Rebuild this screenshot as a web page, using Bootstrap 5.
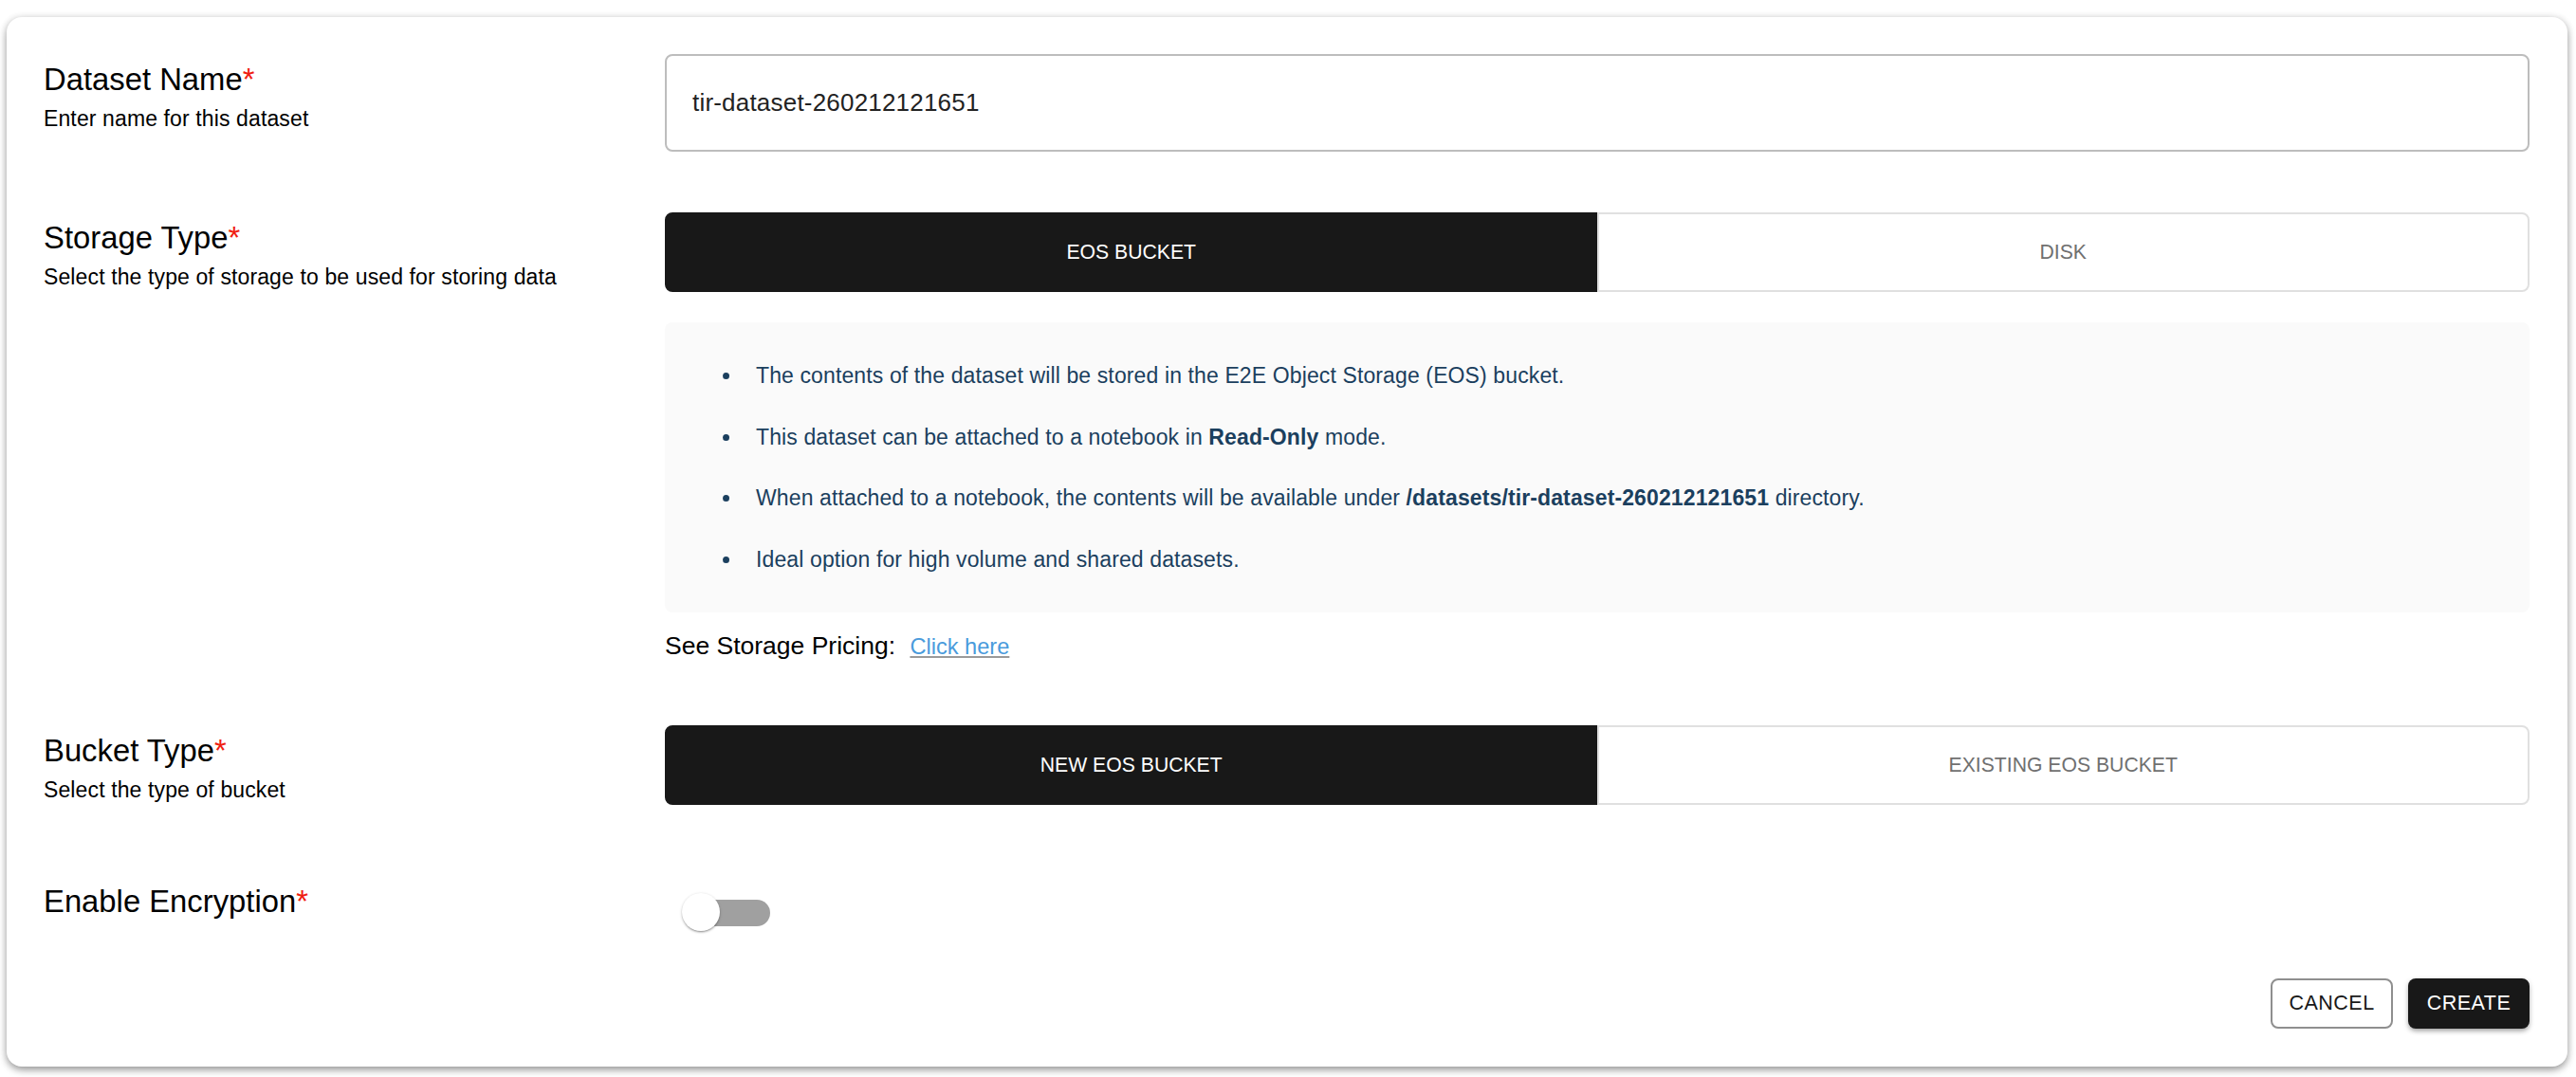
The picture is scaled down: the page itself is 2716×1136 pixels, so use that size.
<!DOCTYPE html>
<html lang="en">
<head>
    <meta charset="UTF-8">
    <meta name="viewport" content="width=device-width, initial-scale=1.0">
    <title>Create Dataset</title>
    <link rel="stylesheet" href="https://cdn.jsdelivr.net/npm/bootstrap@5.3.0/dist/css/bootstrap.min.css">
    <style>
        html, body { height: 100%; background: #fff; overflow: hidden; }
        body { font-family: "Liberation Sans", Arial, sans-serif; color: #000; padding: 18px 9px 0 7px; }
        .form-panel { height: 1107px; border: 0; border-radius: 16px; padding: 39px 40px 0 39px; background: #fff;
            box-shadow: 0 4px 8px -1px rgba(0,0,0,.35), 0 2px 10px rgba(0,0,0,.12), 0 0 8px rgba(0,0,0,.06); }
        .label-col { width: 655px; flex: none; padding-top: 7px; }
        .field-col { flex: 1 1 0; min-width: 0; }
        .field-title { font-size: 32.8px; line-height: 40px; margin: 0; font-weight: 400; }
        .req { color: #f01e12; }
        .field-hint { font-size: 23px; line-height: 32px; letter-spacing: .12px; margin: 5px 0 0; }
        .name-input { height: 103px; border: 2px solid #bdbdbd; border-radius: 8px; padding: 0 27px; font-size: 26px; color: #222; letter-spacing: .2px; box-shadow: none; }
        .seg-group { height: 84px; }
        .seg-btn { flex: 1 1 0; width: 0; font-size: 21.2px; letter-spacing: 0; border-radius: 8px; border: 2px solid #e0e0e0; text-transform: uppercase; color: #707070; background: #fff; padding: 0; }
        .seg-btn.seg-on { background: #181818; border-color: #181818; color: #fff; }
        .info-box { background: #fafafa; border-radius: 8px; height: 306px; margin-top: 32px; padding: 40px 0 0 0; color: #1b3f5e; font-size: 23px; letter-spacing: .12px; }
        .info-box ul { margin: 0; padding-left: 82px; }
        .info-box li { line-height: 32.5px; margin-bottom: 32px; padding-left: 14px; }
        .price-line { font-size: 26.5px; line-height: 40px; margin-top: 15px; }
        .price-line a { color: #4a9bdc; font-size: 23.6px; margin-left: 8px; text-decoration-color: #9a9a9a; }
        .toggle-wrap { position: relative; width: 93px; height: 41px; margin: 18px 0 0 18px; }
        .toggle-track { position: absolute; left: 6px; right: 0; top: 7px; height: 28px; border-radius: 14px; background: #a0a0a0; }
        .toggle-thumb { position: absolute; left: 0; top: 0; width: 40px; height: 40px; border-radius: 50%; background: #fff; box-shadow: 0 2px 2px -1px rgba(0,0,0,.3), 0 1px 3px rgba(0,0,0,.25); }
        .foot-btn { height: 53px; font-size: 21.5px; letter-spacing: .5px; border-radius: 8px; padding: 0; }
        .btn-cancel { width: 129px; border: 2px solid #8f8f8f; background: #fff; color: #181818; }
        .btn-create { width: 128px; border: 0; background: #181818; color: #fff; box-shadow: 0 3px 5px -1px rgba(0,0,0,.3), 0 2px 6px rgba(0,0,0,.15); }
        .storage-row { margin-top: 64px; }
        .bucket-row { margin-top: 63px; }
        .encrypt-row { margin-top: 75px; }
        .foot-row { margin-top: 49px; }
    </style>
</head>
<body>
    <div class="card form-panel">
        <div class="d-flex">
            <div class="label-col">
                <h6 class="field-title">Dataset Name<span class="req">*</span></h6>
                <p class="field-hint">Enter name for this dataset</p>
            </div>
            <div class="field-col">
                <input type="text" class="form-control name-input" value="tir-dataset-260212121651">
            </div>
        </div>

        <div class="d-flex storage-row">
            <div class="label-col">
                <h6 class="field-title">Storage Type<span class="req">*</span></h6>
                <p class="field-hint">Select the type of storage to be used for storing data</p>
            </div>
            <div class="field-col">
                <div class="btn-group w-100 seg-group" role="group">
                    <button type="button" class="btn seg-btn seg-on">EOS Bucket</button>
                    <button type="button" class="btn seg-btn">Disk</button>
                </div>
                <div class="info-box">
                    <ul>
                        <li>The contents of the dataset will be stored in the E2E Object Storage (EOS) bucket.</li>
                        <li>This dataset can be attached to a notebook in <strong>Read-Only</strong> mode.</li>
                        <li>When attached to a notebook, the contents will be available under <strong>/datasets/tir-dataset-260212121651</strong> directory.</li>
                        <li>Ideal option for high volume and shared datasets.</li>
                    </ul>
                </div>
                <div class="price-line">See Storage Pricing: <a href="#">Click here</a></div>
            </div>
        </div>

        <div class="d-flex bucket-row">
            <div class="label-col">
                <h6 class="field-title">Bucket Type<span class="req">*</span></h6>
                <p class="field-hint">Select the type of bucket</p>
            </div>
            <div class="field-col">
                <div class="btn-group w-100 seg-group" role="group">
                    <button type="button" class="btn seg-btn seg-on">New EOS Bucket</button>
                    <button type="button" class="btn seg-btn">Existing EOS Bucket</button>
                </div>
            </div>
        </div>

        <div class="d-flex encrypt-row">
            <div class="label-col">
                <h6 class="field-title">Enable Encryption<span class="req">*</span></h6>
            </div>
            <div class="field-col">
                <div class="toggle-wrap" role="switch" aria-checked="false">
                    <span class="toggle-track"></span>
                    <span class="toggle-thumb"></span>
                </div>
            </div>
        </div>

        <div class="d-flex justify-content-end gap-3 foot-row">
            <button type="button" class="btn foot-btn btn-cancel">CANCEL</button>
            <button type="button" class="btn foot-btn btn-create">CREATE</button>
        </div>
    </div>
    <script src="https://cdn.jsdelivr.net/npm/bootstrap@5.3.0/dist/js/bootstrap.bundle.min.js"></script>
</body>
</html>
